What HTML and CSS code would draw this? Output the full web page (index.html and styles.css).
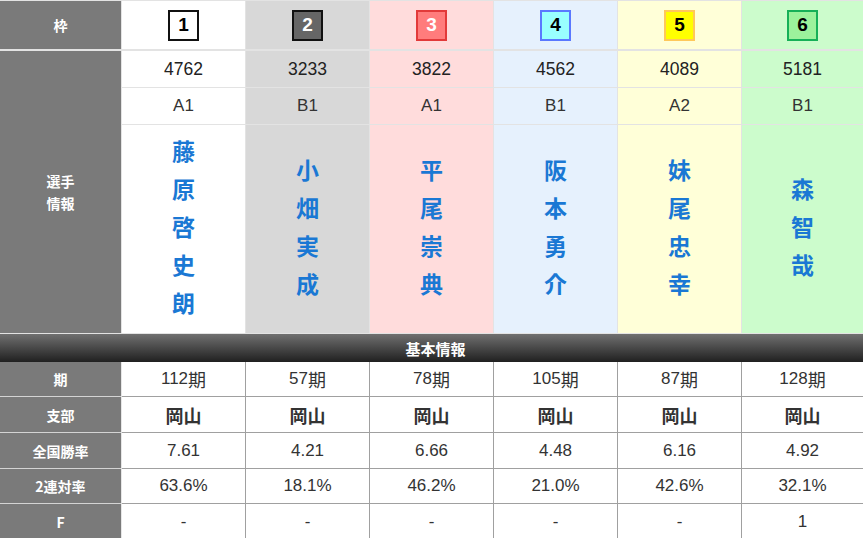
FILE: index.html
```
<!DOCTYPE html>
<html lang="ja">
<head>
<meta charset="utf-8">
<title>出走表</title>
<link rel="stylesheet" href="styles.css">
</head>
<body>
<div class="board">
  <div class="grid head">
    <div class="label">枠</div>
    <div class="cell lane1"><span class="waku w1">1</span></div>
    <div class="cell lane2"><span class="waku w2">2</span></div>
    <div class="cell lane3"><span class="waku w3">3</span></div>
    <div class="cell lane4"><span class="waku w4">4</span></div>
    <div class="cell lane5"><span class="waku w5">5</span></div>
    <div class="cell lane6"><span class="waku w6">6</span></div>
  </div>
  <div class="grid players">
    <div class="label tall">選手<br>情報</div>
    <div class="cell lane1 num">4762</div>
    <div class="cell lane2 num">3233</div>
    <div class="cell lane3 num">3822</div>
    <div class="cell lane4 num">4562</div>
    <div class="cell lane5 num">4089</div>
    <div class="cell lane6 num">5181</div>
    <div class="cell lane1 rank">A1</div>
    <div class="cell lane2 rank">B1</div>
    <div class="cell lane3 rank">A1</div>
    <div class="cell lane4 rank">B1</div>
    <div class="cell lane5 rank">A2</div>
    <div class="cell lane6 rank">B1</div>
    <div class="cell lane1 name"><span>藤</span><span>原</span><span>啓</span><span>史</span><span>朗</span></div>
    <div class="cell lane2 name"><span>小</span><span>畑</span><span>実</span><span>成</span></div>
    <div class="cell lane3 name"><span>平</span><span>尾</span><span>崇</span><span>典</span></div>
    <div class="cell lane4 name"><span>阪</span><span>本</span><span>勇</span><span>介</span></div>
    <div class="cell lane5 name"><span>妹</span><span>尾</span><span>忠</span><span>幸</span></div>
    <div class="cell lane6 name"><span>森</span><span>智</span><span>哉</span></div>
  </div>
  <div class="bar">基本情報</div>
  <div class="grid stats">
    <div class="slabel">期</div>
    <div class="sdata">112<span class="kj">期</span></div><div class="sdata">57<span class="kj">期</span></div><div class="sdata">78<span class="kj">期</span></div><div class="sdata">105<span class="kj">期</span></div><div class="sdata">87<span class="kj">期</span></div><div class="sdata last">128<span class="kj">期</span></div>
    <div class="slabel">支部</div>
    <div class="sdata bold">岡山</div><div class="sdata bold">岡山</div><div class="sdata bold">岡山</div><div class="sdata bold">岡山</div><div class="sdata bold">岡山</div><div class="sdata bold last">岡山</div>
    <div class="slabel">全国勝率</div>
    <div class="sdata">7.61</div><div class="sdata">4.21</div><div class="sdata">6.66</div><div class="sdata">4.48</div><div class="sdata">6.16</div><div class="sdata last">4.92</div>
    <div class="slabel">2連対率</div>
    <div class="sdata">63.6%</div><div class="sdata">18.1%</div><div class="sdata">46.2%</div><div class="sdata">21.0%</div><div class="sdata">42.6%</div><div class="sdata last">32.1%</div>
    <div class="slabel">F</div>
    <div class="sdata">-</div><div class="sdata">-</div><div class="sdata">-</div><div class="sdata">-</div><div class="sdata">-</div><div class="sdata last">1</div>
  </div>
</div>
</body>
</html>
```
FILE: styles.css
```
* { box-sizing: border-box; }
html, body { margin: 0; padding: 0; }
body {
  width: 863px;
  height: 538px;
  overflow: hidden;
  background: #fff;
  font-family: "Liberation Sans", "Noto Sans CJK JP", sans-serif;
  color: #333;
}
.grid {
  display: grid;
  grid-template-columns: 121px repeat(5, 123px) 1fr;
  column-gap: 1px;
  background: #e3e3e3;
}
.head {
  padding: 1px 0 2px;
  grid-template-rows: 48px;
}
.players {
  row-gap: 1px;
  padding-bottom: 1px;
  grid-template-rows: 36px 36px 208px;
}
.label {
  background: #7a7a7a;
  color: #fff;
  font-family: "Noto Sans CJK JP", sans-serif;
  font-weight: bold;
  font-size: 14px;
  line-height: 22px;
  display: flex;
  align-items: center;
  justify-content: center;
  text-align: center;
}
.label.tall { grid-row: 1 / span 3; grid-column: 1; }
.cell {
  display: flex;
  align-items: center;
  justify-content: center;
  font-size: 17px;
}
.lane1 { background: #ffffff; }
.lane2 { background: #d8d8d8; }
.lane3 { background: #ffdcdc; }
.lane4 { background: #e6f1fd; }
.lane5 { background: #ffffd8; }
.lane6 { background: #ccfccc; }
.num { color: #222; font-size: 17.5px; }
.rank { color: #333; }
.waku {
  width: 31px;
  height: 31px;
  border: 2px solid #000;
  display: flex;
  align-items: center;
  justify-content: center;
  font-weight: bold;
  font-size: 19px;
  color: #000;
}
.w1 { background: #fff; border-color: #111; }
.w2 { background: #666; border-color: #111; color: #fff; }
.w3 { background: #ff7c7c; border-color: #e23a3a; color: #fff; }
.w4 { background: #99ffff; border-color: #5a78ff; }
.w5 { background: #ffff00; border-color: #ffc85a; }
.w6 { background: #9cf29c; border-color: #16b058; }
.name {
  flex-direction: column;
  font-family: "Noto Sans CJK JP", sans-serif;
  font-size: 23px;
  font-weight: bold;
  color: #1a78d4;
  line-height: 38px;
  padding-bottom: 6px;
}
.bar {
  height: 28px;
  background: linear-gradient(#707070, #202020);
  color: #fff;
  font-family: "Noto Sans CJK JP", sans-serif;
  font-weight: bold;
  font-size: 15px;
  display: flex;
  align-items: center;
  justify-content: center;
  padding-left: 8px;
}
.stats {
  grid-template-columns: 122px repeat(5, 124px) 1fr;
  grid-template-rows: 35px 36px 36px 35px 36px;
  column-gap: 0;
  background: #fff;
}
.slabel {
  background: #7a7a7a;
  color: #fff;
  font-family: "Noto Sans CJK JP", sans-serif;
  font-weight: bold;
  font-size: 14px;
  border-right: 1px solid #e6e6e6;
  border-bottom: 1px solid #d4d4d4;
  display: flex;
  align-items: center;
  justify-content: center;
}
.sdata {
  background: #fff;
  border-right: 1px solid #a0a0a0;
  border-bottom: 1px solid #a0a0a0;
  display: flex;
  align-items: center;
  justify-content: center;
  font-size: 17px;
  color: #333;
}
.kj { font-family: "Noto Sans CJK JP", sans-serif; font-size: 18px; }
.sdata.last { border-right: none; }
.sdata.bold { font-weight: bold; font-family: "Noto Sans CJK JP", sans-serif; font-size: 18px; }
```
